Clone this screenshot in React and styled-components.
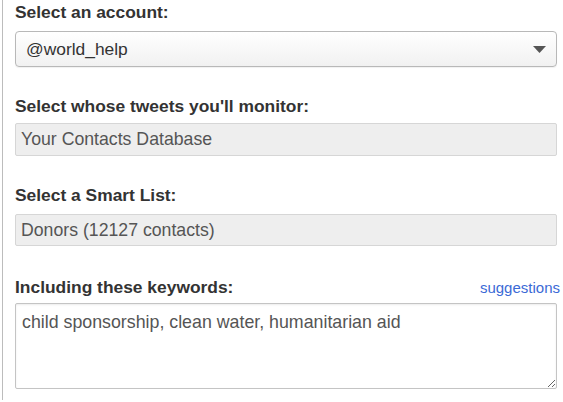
import React from "react";
import styled, { createGlobalStyle } from "styled-components";

const GlobalStyle = createGlobalStyle`
  html, body {
    margin: 0;
    padding: 0;
    background: #fff;
  }
  body {
    font-family: "Liberation Sans", Arial, Helvetica, sans-serif;
  }
`;

const Panel = styled.div`
  margin-left: 2px;
  border-left: 1px solid #bcbcbc;
  padding: 2px 6px 0 12px;
  min-height: 400px;
  box-sizing: border-box;
`;

const Group = styled.div`
  display: flex;
  flex-direction: column;
  margin-bottom: ${(p) => p.$gap || 29}px;
`;

const LabelRow = styled.div`
  display: flex;
  justify-content: space-between;
  align-items: baseline;
  margin-bottom: ${(p) => p.$gap || 9}px;
`;

const Label = styled.label`
  font-size: 17.4px;
  line-height: 20px;
  font-weight: bold;
  color: #333;
`;

const Link = styled.a`
  font-size: 15px;
  color: #3b6ad6;
  text-decoration: none;
  margin-right: -3px;
  cursor: pointer;
`;

const SelectBox = styled.div`
  display: flex;
  align-items: center;
  justify-content: space-between;
  height: 36px;
  box-sizing: border-box;
  padding: 0 10px 0 10px;
  border: 1px solid #b8b8b8;
  border-radius: 4px;
  background: linear-gradient(#ffffff, #f1f1f1);
  box-shadow: 0 1px 1px rgba(0, 0, 0, 0.06);
  font-size: 17.4px;
  color: #333;
`;

const Arrow = styled.svg`
  width: 13px;
  height: 7px;
  fill: #555;
`;

const ReadOnlyField = styled.input`
  display: block;
  width: 100%;
  height: ${(p) => p.$h || 33}px;
  box-sizing: border-box;
  margin: 0;
  padding: 0 5px;
  border: 1px solid #d6d6d6;
  border-radius: 2px;
  background: #eeeeee;
  font-family: inherit;
  font-size: 17.7px;
  color: #555;
  outline: none;
`;

const KeywordArea = styled.textarea`
  display: block;
  width: 100%;
  height: 86px;
  box-sizing: border-box;
  margin: 0;
  padding: 8px 6px;
  border: 1px solid #c4c4c4;
  border-radius: 2px;
  box-shadow: inset 0 1px 2px rgba(0, 0, 0, 0.08);
  background: #fff;
  font-family: inherit;
  font-size: 17.8px;
  line-height: 20px;
  color: #555;
  resize: both;
  outline: none;
`;

const App = () => (
  <>
    <GlobalStyle />
    <Panel>
      <Group>
        <LabelRow>
          <Label>Select an account:</Label>
        </LabelRow>
        <SelectBox>
          <span>@world_help</span>
          <Arrow viewBox="0 0 13 7">
            <path d="M0 0 H13 L6.5 7 Z" />
          </Arrow>
        </SelectBox>
      </Group>

      <Group>
        <LabelRow $gap={7}>
          <Label>Select whose tweets you'll monitor:</Label>
        </LabelRow>
        <ReadOnlyField readOnly value="Your Contacts Database" />
      </Group>

      <Group $gap={31}>
        <LabelRow>
          <Label>Select a Smart List:</Label>
        </LabelRow>
        <ReadOnlyField $h={32} readOnly value="Donors (12127 contacts)" />
      </Group>

      <Group>
        <LabelRow $gap={6}>
          <Label>Including these keywords:</Label>
          <Link>suggestions</Link>
        </LabelRow>
        <KeywordArea defaultValue="child sponsorship, clean water, humanitarian aid" />
      </Group>
    </Panel>
  </>
);

export default App;
